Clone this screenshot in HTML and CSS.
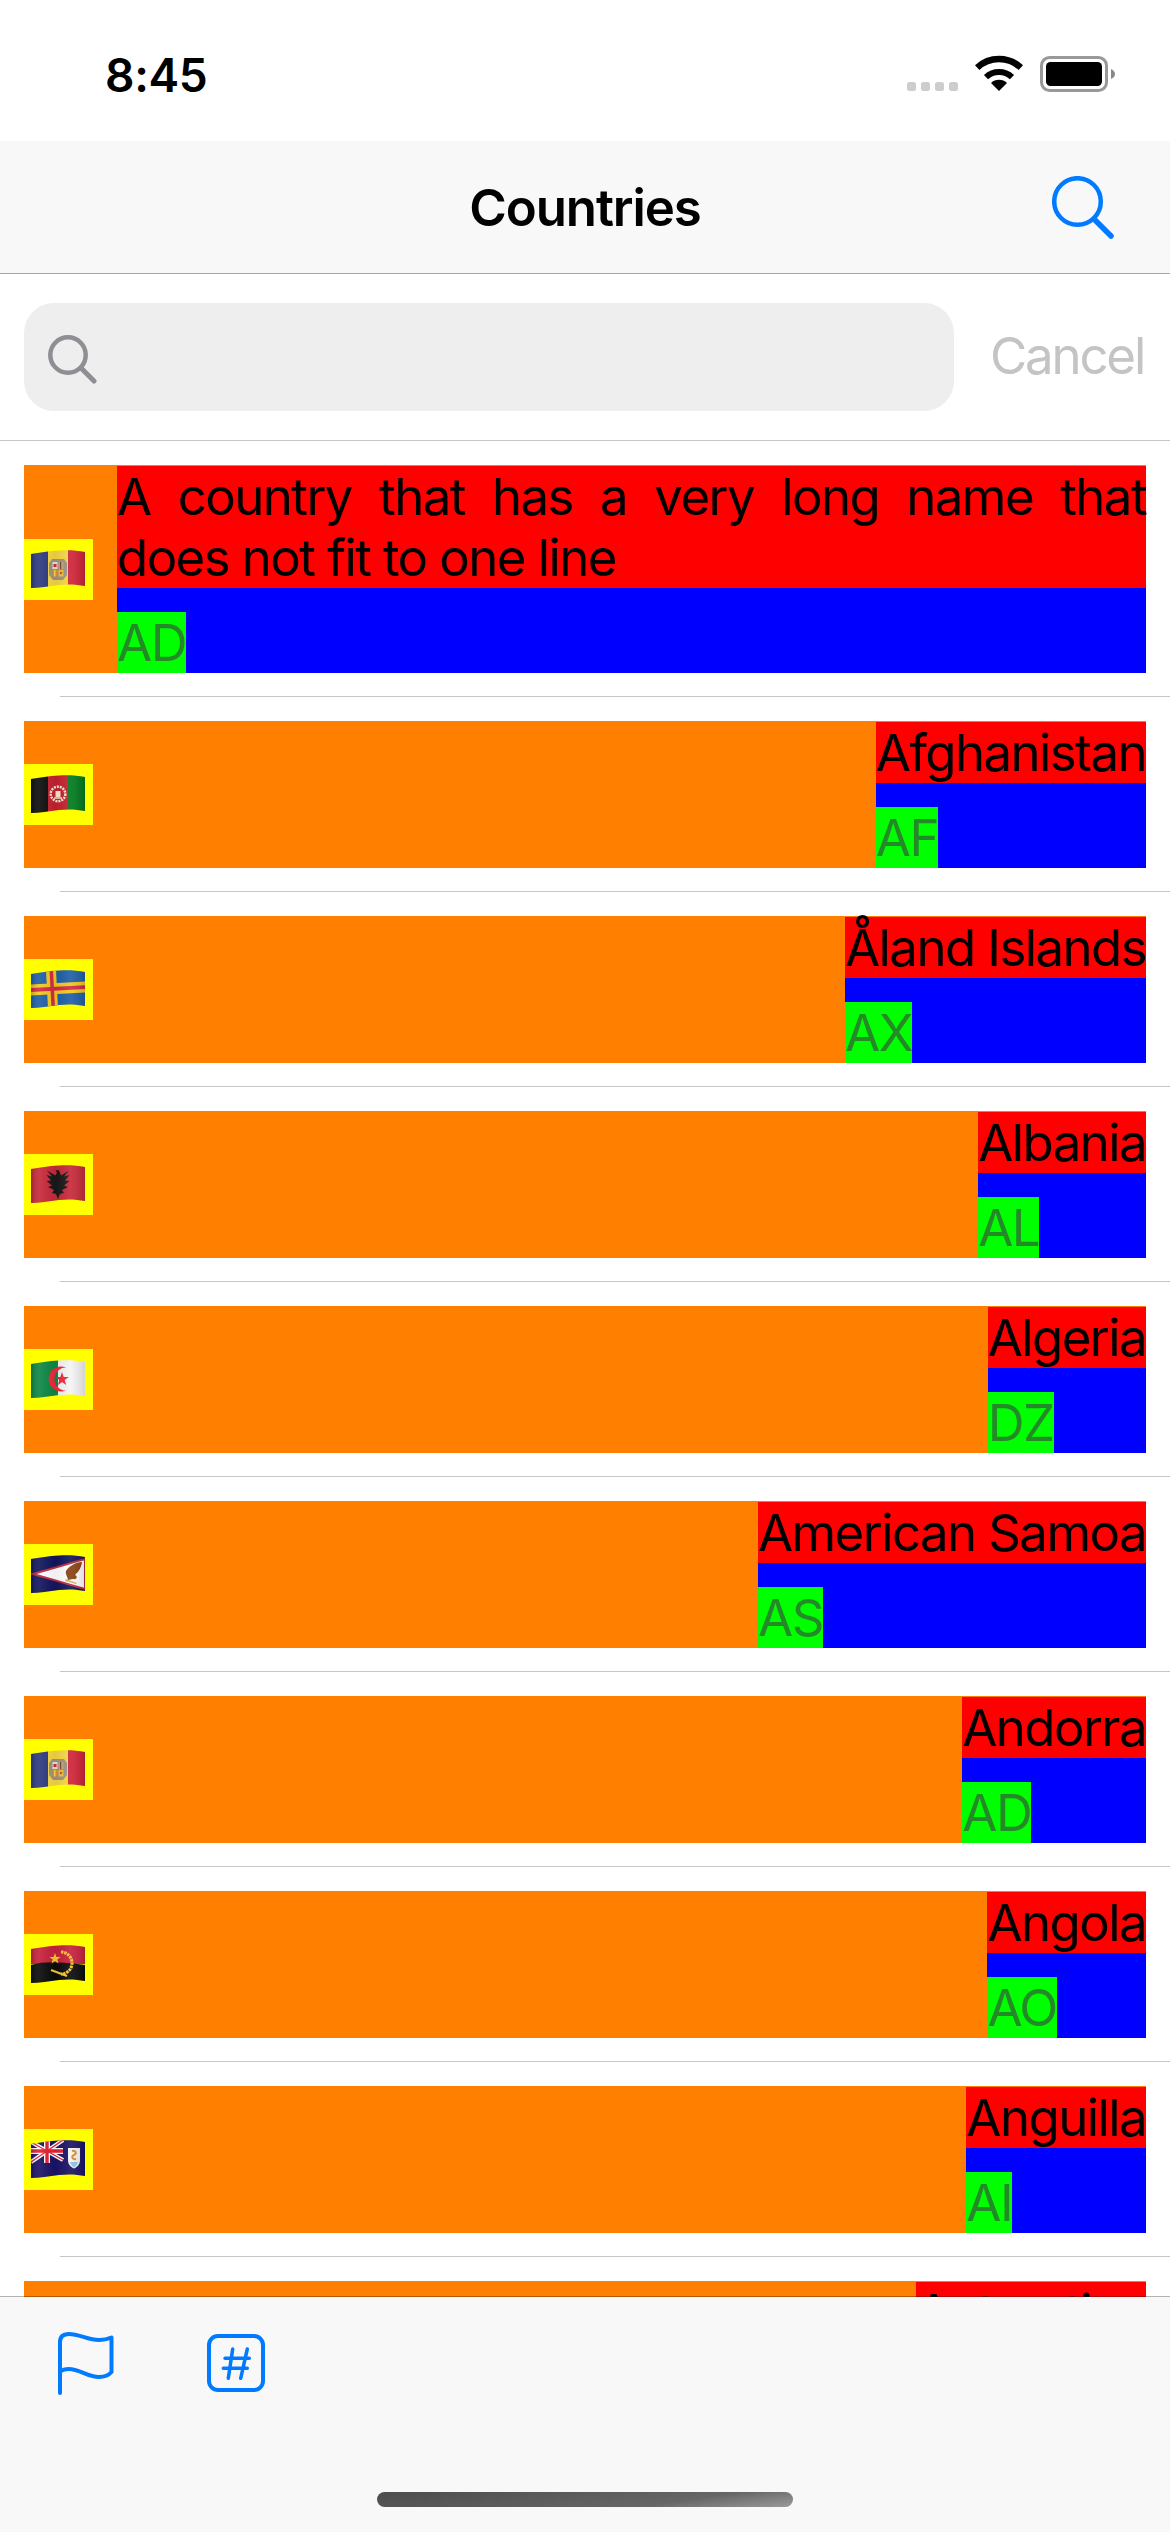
FILE: index.html
```html
<!DOCTYPE html>
<html lang="en">
<head>
<meta charset="utf-8">
<title>Countries</title>
<link rel="stylesheet" href="styles.css">
</head>
<body>
<svg class="defs" width="0" height="0" aria-hidden="true">
  <defs>
    <clipPath id="wave"><path d="M0 5C8 4 18 2 28 1.5C38 1 46 1.5 54 3L54 37C46 35.5 38 35 28 36C18 37 8 39 0 39Z"/></clipPath>
    <linearGradient id="sheen" x1="0" x2="1" y1="0" y2="0">
      <stop offset="0" stop-color="#000" stop-opacity=".2"/>
      <stop offset=".16" stop-color="#fff" stop-opacity=".08"/>
      <stop offset=".45" stop-color="#000" stop-opacity=".06"/>
      <stop offset=".72" stop-color="#fff" stop-opacity=".08"/>
      <stop offset="1" stop-color="#000" stop-opacity=".14"/>
    </linearGradient>
    <g id="shade"><rect width="54" height="40" fill="url(#sheen)"/></g>
    <symbol id="flag-ad" viewBox="0 0 54 40">
      <g clip-path="url(#wave)">
        <rect width="17" height="40" fill="#2d3a80"/><rect x="17" width="20" height="40" fill="#f5d642"/><rect x="37" width="17" height="40" fill="#cf2439"/>
        <path d="M21 10H33L36 14V26L32 31H22L18 26V14Z" fill="#9d9585"/>
        <rect x="21.500" y="13" width="5" height="7" fill="#e8e2d8"/><rect x="22.500" y="15" width="3" height="3" fill="#c8303a"/>
        <rect x="27.500" y="13" width="5" height="7" fill="#c9a07a"/><rect x="29" y="13" width="1.200" height="7" fill="#7a4a2a"/>
        <rect x="21.500" y="21" width="5" height="6.500" fill="#e88f2a"/><rect x="23" y="21" width="1.500" height="6.500" fill="#f4d85a"/>
        <rect x="27.500" y="21" width="5" height="6.500" fill="#eebc3a"/><rect x="29" y="23" width="2" height="2" fill="#c8503a"/>
        <use href="#shade"/>
      </g>
    </symbol>
    <symbol id="flag-af" viewBox="0 0 54 40">
      <g clip-path="url(#wave)">
        <rect width="17" height="40" fill="#0d0d0d"/><rect x="17" width="20" height="40" fill="#c4212f"/><rect x="37" width="17" height="40" fill="#007a1e"/>
        <circle cx="27" cy="20" r="7.300" fill="none" stroke="#f5e8d0" stroke-width="2.400" stroke-dasharray="2 1"/><rect x="24.500" y="17" width="5" height="6" fill="#f5e8d0"/><path d="M23 24H31" stroke="#f5e8d0" stroke-width="1.500"/>
        <use href="#shade"/>
      </g>
    </symbol>
    <symbol id="flag-ax" viewBox="0 0 54 40">
      <g clip-path="url(#wave)">
        <rect width="54" height="40" fill="#1f5fa8"/>
        <g transform="rotate(-3 27 20)">
          <rect x="16" y="-4" width="10" height="48" fill="#f2c81f"/><rect y="14" x="-2" width="58" height="11" fill="#f2c81f"/>
          <rect x="19.500" y="-4" width="3.500" height="48" fill="#d42a45"/><rect y="17.700" x="-2" width="58" height="3.800" fill="#d42a45"/>
        </g>
        <use href="#shade"/>
      </g>
    </symbol>
    <symbol id="flag-al" viewBox="0 0 54 40">
      <g clip-path="url(#wave)">
        <rect width="54" height="40" fill="#c72a3a"/>
        <path d="M27 35L25 30L21 29L23 26L17 23L21 21.500L15.500 17L20 16.500L15.500 11L21 12.500L16 6.500L24.500 11.500L26 8.500L24.500 6.500L27.500 6L29 8.500L30 11.500L38 6.500L33 12.500L38.500 11L34 16.500L38.500 17L33 21.500L37 23L31 26L33 29L29 30Z" fill="#181818"/>
        <use href="#shade"/>
      </g>
    </symbol>
    <symbol id="flag-dz" viewBox="0 0 54 40">
      <g clip-path="url(#wave)">
        <rect width="27" height="40" fill="#0d8745"/><rect x="27" width="27" height="40" fill="#f4f4f4"/>
        <path d="M35 8.500A12.500 12.500 0 1 0 35 31.500A10.500 10.500 0 1 1 35 8.500Z" fill="#ee2a3a"/>
        <path d="M31 13L32.700 18L37.800 18L33.700 21L35.200 26L31 23L27 26L28.300 21L24.500 18L29.300 18Z" fill="#ee2a3a"/>
        <use href="#shade"/>
      </g>
    </symbol>
    <symbol id="flag-as" viewBox="0 0 54 40">
      <g clip-path="url(#wave)">
        <rect width="54" height="40" fill="#12165e"/>
        <path d="M2 20L54 5L54 35Z" fill="#fff" stroke="#bb2a3f" stroke-width="2"/>
        <path d="M35 17C38 12 45 8 51 8C50 15 47 18 44 21C47 22 46 26 42 25L37 26C37 23 34 20 35 17Z" fill="#8a4214"/>
        <path d="M35 25L46 29L45 30L34 27Z" fill="#d9b25a"/>
        <use href="#shade"/>
      </g>
    </symbol>
    <symbol id="flag-ao" viewBox="0 0 54 40">
      <g clip-path="url(#wave)">
        <rect width="54" height="20" fill="#c8213c"/><path d="M0 21C14 17 30 18 54 21V40H0Z" fill="#0b0b0b"/>
        <path d="M30 8A11 11 0 0 1 30 30" fill="none" stroke="#f4c92e" stroke-width="3" stroke-dasharray="2.500 .8"/>
        <path d="M20 26L36 32" stroke="#f4c92e" stroke-width="2.200"/>
        <path d="M24 9L25.500 13L29.500 13L26.300 15.500L27.500 19.500L24 17L20.500 19.500L21.700 15.500L18.500 13L22.500 13Z" fill="#f4c92e"/>
        <use href="#shade"/>
      </g>
    </symbol>
    <symbol id="flag-ai" viewBox="0 0 54 40">
      <g clip-path="url(#wave)">
        <rect width="54" height="40" fill="#1a1368"/>
        <path d="M0 3L32 21M32 1L0 23" stroke="#fff" stroke-width="4"/>
        <path d="M16 0V24M0 12H32" stroke="#fff" stroke-width="6"/>
        <path d="M16 0V24M0 12H32" stroke="#e2202f" stroke-width="3.400"/>
        <path d="M0 3L32 21M32 1L0 23" stroke="#e2202f" stroke-width="1.300"/>
        <path d="M37 9H49V21C49 26 46 28 43 29.500C40 28 37 26 37 21Z" fill="#f2f2ee"/>
        <path d="M39 23H47C46 26 45 27 43 28.500C41 27 40 26 39 23Z" fill="#8fc4e8"/>
        <path d="M41 12C45 11 46 15 43 16C40 17 41 21 45 20" fill="none" stroke="#e0862a" stroke-width="2"/>
        <use href="#shade"/>
      </g>
    </symbol>
    <symbol id="flag-aq" viewBox="0 0 54 40">
      <g clip-path="url(#wave)"><rect width="54" height="40" fill="#3a7dc4"/><use href="#shade"/></g>
    </symbol>
  </defs>
</svg>

<div class="app">
  <header class="status">
    <span class="time">8:45</span>
    <div class="status-icons">
      <div class="dots"><i></i><i></i><i></i><i></i></div>
      <svg class="wifi" viewBox="0 0 48 36" aria-hidden="true">
        <path d="M2.200 12.600A32 32 0 0 1 45.800 12.600" fill="none" stroke="#000" stroke-width="6.500"/>
        <path d="M11 22.100A19 19 0 0 1 37 22.100" fill="none" stroke="#000" stroke-width="6"/>
        <path d="M24 36L16 28A11.500 11.500 0 0 1 32 28Z" fill="#000"/>
      </svg>
      <svg class="battery" viewBox="0 0 75 36" aria-hidden="true">
        <rect x="1.500" y="1.500" width="65" height="33" rx="8" fill="none" stroke="#999" stroke-width="3"/>
        <rect x="6" y="6" width="56" height="24" rx="4.500" fill="#000"/>
        <path d="M71 13C73.500 14 75 16 75 18C75 20 73.500 22 71 23Z" fill="#888"/>
      </svg>
    </div>
  </header>

  <nav class="navbar">
    <h1 class="title">Countries</h1>
    <svg class="nav-search" viewBox="0 0 62 63" aria-hidden="true">
      <circle cx="25.500" cy="25.500" r="23.300" fill="none" stroke="#007aff" stroke-width="4.500"/>
      <path d="M42 43L59 60" stroke="#007aff" stroke-width="5.500" stroke-linecap="round"/>
    </svg>
  </nav>

  <section class="searchbar">
    <div class="field">
      <svg class="field-icon" viewBox="0 0 49 49" aria-hidden="true">
        <circle cx="20" cy="20" r="17.700" fill="none" stroke="#8e8e93" stroke-width="4.500"/>
        <path d="M33 33L46 46" stroke="#8e8e93" stroke-width="5" stroke-linecap="round"/>
      </svg>
    </div>
    <span class="cancel">Cancel</span>
  </section>

  <main class="list">
    <article class="row long">
      <div class="flag-box"><svg class="flag"><use href="#flag-ad"/></svg></div>
      <div class="text"><div class="name">A country that has a very long name that does not fit to one line</div><div class="code">AD</div></div>
    </article>
    <hr class="sep">
    <article class="row">
      <div class="flag-box"><svg class="flag"><use href="#flag-af"/></svg></div>
      <div class="text"><div class="name">Afghanistan</div><div class="code">AF</div></div>
    </article>
    <hr class="sep">
    <article class="row">
      <div class="flag-box"><svg class="flag"><use href="#flag-ax"/></svg></div>
      <div class="text"><div class="name">Åland Islands</div><div class="code">AX</div></div>
    </article>
    <hr class="sep">
    <article class="row">
      <div class="flag-box"><svg class="flag"><use href="#flag-al"/></svg></div>
      <div class="text"><div class="name">Albania</div><div class="code">AL</div></div>
    </article>
    <hr class="sep">
    <article class="row">
      <div class="flag-box"><svg class="flag"><use href="#flag-dz"/></svg></div>
      <div class="text"><div class="name">Algeria</div><div class="code">DZ</div></div>
    </article>
    <hr class="sep">
    <article class="row">
      <div class="flag-box"><svg class="flag"><use href="#flag-as"/></svg></div>
      <div class="text"><div class="name">American Samoa</div><div class="code">AS</div></div>
    </article>
    <hr class="sep">
    <article class="row">
      <div class="flag-box"><svg class="flag"><use href="#flag-ad"/></svg></div>
      <div class="text"><div class="name">Andorra</div><div class="code">AD</div></div>
    </article>
    <hr class="sep">
    <article class="row">
      <div class="flag-box"><svg class="flag"><use href="#flag-ao"/></svg></div>
      <div class="text"><div class="name">Angola</div><div class="code">AO</div></div>
    </article>
    <hr class="sep">
    <article class="row">
      <div class="flag-box"><svg class="flag"><use href="#flag-ai"/></svg></div>
      <div class="text"><div class="name">Anguilla</div><div class="code">AI</div></div>
    </article>
    <hr class="sep">
    <article class="row">
      <div class="flag-box"><svg class="flag"><use href="#flag-aq"/></svg></div>
      <div class="text"><div class="name">Antarctica</div><div class="code">AQ</div></div>
    </article>
  </main>

  <footer class="toolbar">
    <div class="tools">
      <svg class="tool-flag" viewBox="0 0 56 63" aria-hidden="true">
        <path d="M2 61V10C2 5 5 2 11 2C21 2 30 8 41 8C46 8 50 7 53.500 5.500V40C50 44 46 45 41 45C30 45 21 37 11 37C7 37 4 38 2 39.500" fill="none" stroke="#007aff" stroke-width="4" stroke-linecap="round" stroke-linejoin="round"/>
      </svg>
      <svg class="tool-hash" viewBox="0 0 58 59" aria-hidden="true">
        <rect x="2" y="2" width="54" height="54" rx="9" fill="none" stroke="#007aff" stroke-width="4"/>
        <path d="M25.700 15L21.300 44.300M40.300 15L33.700 44.300M18 24.300H42.300M16.300 34.300H40.300" fill="none" stroke="#007aff" stroke-width="3.500" stroke-linecap="round"/>
      </svg>
    </div>
    <div class="home"></div>
  </footer>
</div>
</body>
</html>
```
FILE: styles.css
```css
* { box-sizing: border-box; }

html, body {
  margin: 0;
  padding: 0;
  background: #fff;
}

body {
  font-family: Inter, "Liberation Sans", sans-serif;
  color: #000;
}

.defs { display: block; width: 0; height: 0; }

.app {
  width: 1170px;
  height: 2532px;
  display: flex;
  flex-direction: column;
  overflow: hidden;
}

.status {
  height: 141px;
  flex: none;
  display: flex;
  justify-content: space-between;
  padding: 52px 55px 0 105px;
}

.time {
  font-size: 46px;
  font-weight: 600;
  line-height: 46px;
  letter-spacing: -0.3px;
}

.status-icons {
  display: flex;
  align-items: flex-start;
  padding-top: 3px;
}

.dots {
  display: flex;
  gap: 5px;
  margin-top: 27px;
  margin-right: 17px;
}

.dots i {
  width: 9px;
  height: 9px;
  border-radius: 2.5px;
  background: #cdcdcd;
}

.wifi { width: 48px; height: 36px; margin-right: 17px; }
.battery { width: 75px; height: 36px; margin-top: 1px; }

.navbar {
  height: 133px;
  flex: none;
  background: #f8f8f8;
  border-bottom: 1px solid #a6a6a6;
  display: flex;
  align-items: center;
  justify-content: center;
  position: relative;
}

.title {
  margin: 0;
  font-size: 51px;
  font-weight: 600;
  letter-spacing: -1.1px;
  line-height: 61px;
}

.nav-search {
  position: absolute;
  left: 1052px;
  top: 35px;
  width: 62px;
  height: 63px;
}

.searchbar {
  height: 167px;
  flex: none;
  display: flex;
  align-items: flex-start;
  padding: 29px 28px 0 24px;
  border-bottom: 1px solid #c6c6c8;
}

.field {
  width: 930px;
  height: 108px;
  flex: none;
  background: #eeeeee;
  border-radius: 30px;
  display: flex;
  align-items: center;
  padding-left: 24px;
}

.field-icon { width: 49px; height: 49px; margin-top: 4px; }

.cancel {
  margin-left: 36px;
  font-size: 51px;
  line-height: 106px;
  letter-spacing: -2.2px;
  color: #c4c4c4;
}

.list {
  flex: 1;
  min-height: 0;
  overflow: hidden;
  padding-top: 24px;
}

.row {
  margin: 0 24px;
  display: flex;
  align-items: center;
  background: #ff7f00;
}

.flag-box {
  width: 69px;
  height: 61px;
  flex: none;
  background: #ffff00;
  padding: 10px 8px 11px 7px;
}

.flag { display: block; width: 54px; height: 40px; }

.text {
  margin-left: auto;
  margin-top: 1px;
  align-self: stretch;
  display: flex;
  flex-direction: column;
  background: #0000ff;
  min-width: 0;
}

.row.long .text { margin-left: 24px; }

.name {
  background: #ff0000;
  font-size: 51px;
  line-height: 61px;
  letter-spacing: -1.6px;
  text-align: justify;
}

.code {
  align-self: flex-start;
  margin-top: 24px;
  background: #00ff00;
  color: rgba(60, 60, 67, 0.6);
  font-size: 51px;
  line-height: 61px;
  letter-spacing: -1.5px;
}

.sep {
  margin: 23px 0 24px 60px;
  height: 1px;
  border: 0;
  background: #c6c6c8;
}

.toolbar {
  height: 236px;
  flex: none;
  margin-top: -1px;
  position: relative;
  background: #f8f8f8;
  border-top: 1px solid rgba(0, 0, 0, 0.3);
  background-clip: padding-box;
  display: flex;
  flex-direction: column;
  align-items: center;
}

.tools {
  align-self: stretch;
  display: flex;
  align-items: flex-start;
  height: 195px;
  padding: 35px 0 0 58px;
}

.tool-flag { width: 56px; height: 63px; }
.tool-hash { width: 58px; height: 59px; margin: 2px 0 0 93px; }

.home {
  width: 416px;
  height: 15px;
  border-radius: 8px;
  background: linear-gradient(172deg, #4c4c4c 0%, #666 70%, #9a9a9a 100%);
}
```
